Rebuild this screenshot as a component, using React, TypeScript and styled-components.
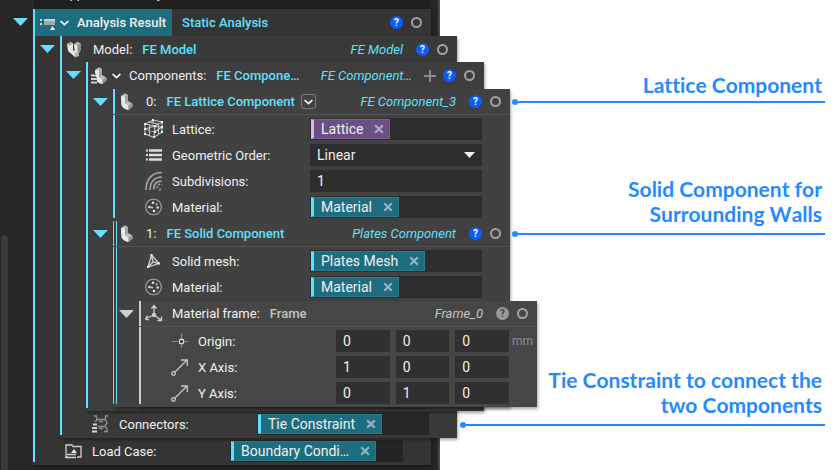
import React from "react";
import styled, { createGlobalStyle, css } from "styled-components";

const CYAN = "#5fe0ff";
const TEAL = "#1e6d7f";

const GlobalStyle = createGlobalStyle`
  *, *::before, *::after { box-sizing: border-box; }
  body { margin: 0; background: #fff; font-family: Roboto, "Liberation Sans", sans-serif; font-size: 13px; }
  button, input, select { font: inherit; color: inherit; border: 0; padding: 0; margin: 0; background: none; border-radius: 0; }
  button { cursor: pointer; }
  svg { flex: none; display: block; }
`;

const Page = styled.div`
  display: grid;
  grid-template-columns: minmax(0, 440fr) minmax(0, 392fr);
  min-height: 100vh;
  overflow: hidden;
`;

const Notebook = styled.main`
  background: #262626;
  border-right: 2px solid #484848;
  display: flex;
  color: #f0f0f0;
  height: 100vh;
`;

const Gutter = styled.div`
  flex: none;
  width: 33px;
  display: flex;
  flex-direction: column;
  justify-content: flex-end;
`;

const ScrollThumb = styled.div`
  width: 7px;
  height: 50vh;
  margin-left: 1px;
  border-radius: 4px 4px 0 0;
  background: #383838;
`;

const Column = styled.div`
  flex: 1;
  min-width: 0;
  margin-right: 7px;
  border-left: 1px solid #2e2e2e;
  margin-left: -1px;
`;

const PreviousBlock = styled.div`
  height: 9px;
  padding-left: 28px;
  overflow: hidden;
  display: flex;
  align-items: flex-end;
  background: #202020;
`;

const ClippedTitle = styled.span`
  line-height: 14px;
  margin-bottom: 8px;
`;

const stripes = {
  solid: css`
    background-image: linear-gradient(${CYAN}, ${CYAN});
    background-size: 2px calc(100% - 3px);
  `,
  double: css`
    background-image: linear-gradient(${CYAN}, ${CYAN}), linear-gradient(${CYAN}, ${CYAN});
    background-size: 1px calc(100% - 3px), 1px calc(100% - 3px);
    background-position: 0 0, 3px 0;
  `,
  plain: css`
    background-image: linear-gradient(#cfcfcf, #cfcfcf);
    background-size: 2px calc(100% - 3px);
  `,
};

const tones = ["#343434", "#393939", "#3d3d3d", "#414141", "#464646"];

const Panel = styled.section<{ $level: number; $stripe: keyof typeof stripes }>`
  flex: 1;
  min-width: 0;
  padding-bottom: ${(p) => (p.$level === 2 ? 4 : 0)}px;
  background-color: ${(p) => tones[p.$level]};
  background-repeat: no-repeat;
  ${(p) => stripes[p.$stripe]}
  box-shadow: 1px 2px 3px rgba(0, 0, 0, 0.35);
`;

const Node = styled.div<{ $step: 0 | 26 | 27 }>`
  display: flex;
  margin-right: ${(p) => (p.$step ? p.$step - 53 : 0)}px;
  margin-left: ${(p) => (p.$step ? 0 : -33)}px;
`;

const ToggleCell = styled.div<{ $step: 0 | 26 | 27 }>`
  flex: none;
  width: ${(p) => p.$step || 33}px;
  display: flex;
  justify-content: flex-end;
  align-items: flex-start;
  padding-right: 5px;
`;

const Toggle = styled.button<{ $muted?: boolean }>`
  display: flex;
  align-items: center;
  height: 26px;
  color: ${(p) => (p.$muted ? "#cfcfcf" : CYAN)};
`;

const Header = styled.header<{ $tall?: boolean; $ruled?: boolean }>`
  display: flex;
  align-items: center;
  height: ${(p) => (p.$tall ? 27 : 26)}px;
  padding: 0 8px 0 5px;
  border-bottom: ${(p) => (p.$ruled ? "1px solid #525252" : "0")};
`;

const HeaderIcon = styled.span`
  display: flex;
  width: 18px;
  flex: none;
`;

const HeaderLabel = styled.span<{ $gap: number }>`
  margin-left: ${(p) => p.$gap}px;
  white-space: nowrap;
`;

const Title = styled.span<{ $muted?: boolean }>`
  margin-left: 10px;
  font-weight: 500;
  color: ${(p) => (p.$muted ? "#c4c4c4" : CYAN)};
  white-space: nowrap;
`;

const VarName = styled.em<{ $muted?: boolean }>`
  margin-left: auto;
  margin-right: 13px;
  color: ${(p) => (p.$muted ? "#c4c4c4" : CYAN)};
  white-space: nowrap;
`;

const ResultTab = styled.div`
  display: flex;
  align-items: center;
  align-self: stretch;
  margin-left: -3px;
  padding: 0 6px 0 4px;
  background: ${TEAL};
  font-weight: 500;
`;

const ChevronButton = styled.button<{ $boxed?: boolean }>`
  display: flex;
  align-items: center;
  justify-content: center;
  width: ${(p) => (p.$boxed ? 15 : 12)}px;
  height: 15px;
  margin-left: ${(p) => (p.$boxed ? 6 : 1)}px;
  border: ${(p) => (p.$boxed ? "1px solid #7c7c7c" : "0")};
  border-radius: 3px;
`;

const Actions = styled.div`
  display: flex;
  align-items: center;
  gap: 7px;
`;

const HelpButton = styled.button<{ $muted?: boolean }>`
  width: 13px;
  height: 13px;
  border-radius: 50%;
  background: ${(p) => (p.$muted ? "#9a9a9a" : "#0a5cff")};
  color: ${(p) => (p.$muted ? "#464646" : "#fff")};
  font-size: 10px;
  font-weight: 700;
  line-height: 13px;
  text-align: center;
`;

const RingButton = styled.button`
  width: 11px;
  height: 11px;
  margin: 0 1px;
  border: 2px solid #a2a2a2;
  border-radius: 50%;
`;

const PlusButton = styled.button`
  display: flex;
  color: #8c8c8c;
  margin-left: -1px;
`;

const Rows = styled.div<{ $single?: boolean }>`
  display: grid;
  grid-template-columns: minmax(0, 1fr);
  gap: 4px;
  padding: ${(p) => (p.$single ? 2 : 3)}px 0 3px;
`;

const RowBox = styled.div`
  display: flex;
  align-items: center;
  height: 22px;
  padding: 0 28px 0 31px;
`;

const RowIcon = styled.span`
  display: flex;
  flex: none;
  width: 20px;
  margin-right: 8px;
  color: #c4c4c4;
`;

const rowLabel = css`
  flex: none;
  width: 138px;
  white-space: nowrap;
`;
const RowLabel = styled.label`${rowLabel}`;
const RowCaption = styled.span`${rowLabel}`;

const Well = styled.div`
  flex: 1;
  min-width: 0;
  height: 22px;
  padding: 1px;
  display: flex;
  background: rgba(0, 0, 0, 0.3);
`;

const ChipBox = styled.span<{ $purple?: boolean }>`
  display: flex;
  align-items: center;
  gap: 11px;
  height: 20px;
  padding: 0 5px 0 7px;
  font-size: 14px;
  white-space: nowrap;
  background: ${(p) => (p.$purple ? "#6a4f82" : TEAL)};
  border: 1px solid ${(p) => (p.$purple ? "#7a6090" : "#287a8c")};
  border-left: 3px solid ${(p) => (p.$purple ? "#d9b3ff" : CYAN)};
`;

const RemoveButton = styled.button`
  display: flex;
  color: rgba(255, 255, 255, 0.5);
`;

const TextInput = styled.input`
  flex: 1;
  min-width: 0;
  height: 22px;
  padding: 0 7px;
  font-size: 14px;
  background: rgba(0, 0, 0, 0.3);
`;

const SelectWell = styled.div`
  flex: 1;
  min-width: 0;
  display: flex;
  align-items: center;
  height: 22px;
  padding-right: 7px;
  background: rgba(0, 0, 0, 0.3);
`;

const Select = styled.select`
  flex: 1;
  min-width: 0;
  height: 22px;
  padding-left: 7px;
  font-size: 14px;
  appearance: none;
`;

const Vector = styled.div`
  flex: 1;
  min-width: 0;
  display: grid;
  grid-template-columns: repeat(3, 1fr);
  gap: 6px;
`;

const Unit = styled.span`
  width: 28px;
  margin-right: -28px;
  padding-left: 3px;
  font-size: 12px;
  color: #8f8f8f;
`;

const Callouts = styled.aside`
  position: relative;
  display: flex;
  flex-direction: column;
  padding: 72px 7px 0 20px;
  font-family: Lato, sans-serif;
  font-size: 21px;
  font-weight: 700;
  font-kerning: none;
  font-variant-ligatures: none;
  line-height: 25px;
  color: #2589ff;
  text-align: right;
`;

const Callout = styled.div<{ $inset?: boolean; $before?: number }>`
  margin-left: ${(p) => (p.$inset ? 52 : 0)}px;
  margin-top: ${(p) => p.$before ?? 0}px;
`;

const CalloutText = styled.p<{ $width: number }>`
  margin: 0 3px 0 auto;
  max-width: ${(p) => p.$width}px;
`;

const Leader = styled.div<{ $gap: number }>`
  display: flex;
  align-items: center;
  height: 6px;
  margin-top: ${(p) => p.$gap}px;
  &::before { content: ""; width: 6px; height: 6px; border-radius: 50%; background: #2589ff; }
  &::after { content: ""; flex: 1; height: 2px; background: #2589ff; }
`;

/* ---------- drawings ---------- */

const TriangleDown = ({ w = 15, h = 8 }: { w?: number; h?: number }) => (
  <svg width={w} height={h} viewBox="0 0 15 8"><path d="M0 0H15L7.5 8Z" fill="currentColor" /></svg>
);
const Chevron = () => (
  <svg width="9" height="6" viewBox="0 0 9 6"><path d="M0.600 1L4.500 4.700L8.400 1" fill="none" stroke="#fff" strokeWidth="1.700" /></svg>
);
const Cross = () => (
  <svg width="10" height="10" viewBox="0 0 10 10"><path d="M1.2 1.2L8.8 8.8M8.8 1.2L1.2 8.8" stroke="currentColor" strokeWidth="2.2" /></svg>
);
const Plus = () => (
  <svg width="12" height="12" viewBox="0 0 12 12"><path d="M6 0V12M0 6H12" stroke="currentColor" strokeWidth="2" /></svg>
);

const ResultIcon = () => (
  <svg width="18" height="16" viewBox="0 0 18 16">
    <path d="M1 4h2v2H1zM1 8h2v2H1z" fill="#cfe0e4" />
    <path d="M5 4h11v6H5z" fill="#9fa8aa" /><path d="M5 4h11v2H5z" fill="#c9cfd1" />
    <path d="M13.500 11L16 15H11Z" fill="#f2f2f2" />
  </svg>
);
const Limb = () => (
  <>
    <path d="M1 3L4.500 0.500Q7.500 0 8 3V8L11.500 10Q13 11 12.500 13.500L8.500 17Q3 16 1.500 12Z" fill="#bdbdbd" />
    <path d="M1 3L5 3.500V10.500L8.500 12.500V17Q3 16 1.500 12Z" fill="#e9e9e9" />
    <path d="M8.500 12.500L12.500 10.500V13.500L8.500 17Z" fill="#929292" />
    <path d="M5 3.500L8 2V8L5 10.500Z" fill="#a2a2a2" />
  </>
);
const ComponentIcon = () => (
  <svg width="18" height="18" viewBox="-2 0 18 18"><Limb /></svg>
);
const ModelIcon = () => (
  <svg width="18" height="17" viewBox="-1 0 18 17">
    <path d="M1 3L5 1L7 2.500V9L9 10.500V16L2 10Z" fill="#e6e6e6" />
    <path d="M1 3L5 1L7 2.500L3.500 4.500Z" fill="#a8a8a8" />
    <path d="M8 3L12 0.500L15 3V9L13 12V15L9 16.500V10Z" fill="#b2b2b2" />
    <path d="M8 3L11 5V11L9 12Z" fill="#f0f0f0" /><path d="M12 4L15 3V9L12 11Z" fill="#8c8c8c" />
  </svg>
);
const ComponentsIcon = () => (
  <svg width="18" height="18" viewBox="0 0 18 18">
    <g transform="translate(3 0)"><Limb /></g>
    <path d="M0 8.500h5M0 12h6M0 15.500h6" stroke="#3d3d3d" strokeWidth="3.600" />
    <path d="M0 8.500h5M0 12h6M0 15.500h6" stroke="#d0d0d0" strokeWidth="2" />
  </svg>
);
const LatticeIcon = () => (
  <svg width="20" height="20" viewBox="0 0 20 20" fill="none" stroke="currentColor" strokeWidth="1.100">
    <path d="M1 5L9 1L18 3L11 7ZM1 5V15L10 18.500L18 13V3M11 7L10 18.500M1 10L10.500 13L18 8M5.500 6V16.500M14.500 5V15.500M5 3L14.500 5M9 1V5.500M1 10L9 7.500L18 8" />
    <path d="M0 4h2v2H0zM8 0h2v2H8zM17 2h2v2h-2zM10 6h2v2h-2zM0 9h2v2H0zM0 14h2v2H0zM9 17h2v2H9zM17 12h2v2h-2zM17 7h2v2h-2zM10 12h2v2h-2z" fill="#efefef" stroke="none" />
  </svg>
);
const OrderIcon = () => (
  <svg width="20" height="20" viewBox="0 0 20 20" fill="none" stroke="#dcdcdc">
    <path d="M2 5.500h2M2 10h2M2 14.500h2" strokeWidth="2" /><path d="M5 5.500h13M5 10h13M5 14.500h13" strokeWidth="2.400" />
  </svg>
);
const SubdivisionIcon = () => (
  <svg width="20" height="20" viewBox="0 0 20 20" fill="none" stroke="#a6a6a6" strokeWidth="1.600">
    <path d="M2 19C2 8 8 1.500 18 1.500M6 19C6 11 10.500 6 18 6M10 18.500C9 13 13 9.500 18 10.500" />
    <path d="M13.500 17C12 14 15 12.500 18 14M15 19L18 17.500" strokeDasharray="2 1.500" />
  </svg>
);
const MaterialIcon = () => (
  <svg width="20" height="20" viewBox="0 0 20 20">
    <circle cx="9.500" cy="10" r="7.800" fill="none" stroke="#a6a6a6" strokeWidth="1.100" />
    <g fill="#dedede">
      <circle cx="9" cy="5.800" r="1.300" /><circle cx="5.500" cy="10" r="1.300" />
      <circle cx="10" cy="14" r="1.300" /><circle cx="13.700" cy="10.500" r="1.300" />
      <circle cx="12.600" cy="7.200" r="0.900" /><circle cx="8" cy="10.500" r="0.900" />
    </g>
  </svg>
);
const MeshIcon = () => (
  <svg width="20" height="20" viewBox="0 0 20 20" fill="none" stroke="#cfcfcf" strokeWidth="1.300">
    <path d="M7.500 4L4 16L15 12.500ZM7.500 4L9 11L15 12.500M9 11L4 16" />
    <path d="M6.500 3h2v2h-2zM3 15h2v2H3zM14 11.500h2v2h-2z" fill="#e8e8e8" stroke="none" />
  </svg>
);
const FrameIcon = () => (
  <svg width="20" height="20" viewBox="0 0 20 20" fill="none" stroke="#cfcfcf" strokeWidth="1.300">
    <path d="M10 11V2M7.500 4.500L10 1.500L12.500 4.500M10 11L2 14.500M3.500 11.500L1.500 14.800L5 16M10 11L17 16M17.500 12.500V16.500H13.500" />
    <circle cx="10" cy="11" r="1.500" fill="#cfcfcf" />
  </svg>
);
const OriginIcon = () => (
  <svg width="20" height="20" viewBox="0 0 20 20" fill="none" stroke="#8a8a8a">
    <path d="M2 10.500H8M13 10.500H18M11.500 2V8M11.500 13V17" strokeWidth="1.200" />
    <rect x="9.500" y="8.500" width="4" height="4" rx="1" fill="#222" stroke="#dcdcdc" strokeWidth="1.300" />
  </svg>
);
const AxisIcon = () => (
  <svg width="20" height="20" viewBox="0 0 20 20" fill="none" stroke="#c8c8c8" strokeWidth="1.300">
    <path d="M4.500 15.500L17 3M11 3H17.300V9" /><circle cx="3.500" cy="16.500" r="1.800" />
  </svg>
);
const ConnectorIcon = () => (
  <svg width="20" height="20" viewBox="0 0 20 20" fill="none" stroke="#8e8e8e" strokeWidth="1.400">
    <path d="M5 2L6 5L4.500 8M15 2L14 5L16 9L14 12L16 15V18M6 5.500H14M7 12.500H14M8 7.500H12M8 14.500H12M3 2H6M14 2H17M13 17.500H17" />
    <path d="M2 10.500h4M1 14h5M1 17.500h5" stroke="#d4d4d4" strokeWidth="2.200" />
  </svg>
);
const LoadIcon = () => (
  <svg width="20" height="20" viewBox="0 0 20 20" fill="none" stroke="#cfcfcf" strokeWidth="1.300">
    <path d="M4 16H2V4H8L9 5.500H17V16H13" /><path d="M10 8L13 12H7Z" fill="#e8e8e8" stroke="none" /><path d="M3 13.500H12M1 16.500H12" />
  </svg>
);

/* ---------- parts ---------- */

const HeaderActions = ({ name, muted, add }: { name?: string; muted?: boolean; add?: boolean }) => (
  <>
    <VarName $muted={muted}>{name}</VarName>
    <Actions>
      {add && <PlusButton aria-label="Add"><Plus /></PlusButton>}
      <HelpButton $muted={muted} aria-label="Help">?</HelpButton>
      <RingButton aria-label="Options" />
    </Actions>
  </>
);

type BranchProps = {
  level: number;
  step: 0 | 26 | 27;
  stripe?: keyof typeof stripes;
  children: React.ReactNode;
};
const Branch = ({ level, step, stripe = "solid", children }: BranchProps) => (
  <Node $step={step}>
    <ToggleCell $step={step}>
      <Toggle $muted={stripe === "plain"} aria-label="Collapse" aria-expanded><TriangleDown /></Toggle>
    </ToggleCell>
    <Panel $level={level} $stripe={stripe}>{children}</Panel>
  </Node>
);

const ChipRow = ({ icon, label, value, purple }: { icon: React.ReactNode; label: string; value: string; purple?: boolean }) => (
  <RowBox>
    <RowIcon>{icon}</RowIcon>
    <RowCaption>{label}</RowCaption>
    <Well>
      <ChipBox $purple={purple}>
        {value}
        <RemoveButton aria-label={`Remove ${value}`}><Cross /></RemoveButton>
      </ChipBox>
    </Well>
  </RowBox>
);

const VectorRow = ({ id, icon, label, values, unit }: { id: string; icon: React.ReactNode; label: string; values: string[]; unit?: string }) => (
  <RowBox>
    <RowIcon>{icon}</RowIcon>
    <RowLabel htmlFor={`${id}-0`}>{label}</RowLabel>
    <Vector>
      {values.map((v, i) => (
        <TextInput key={i} id={`${id}-${i}`} aria-label={`${label} ${i + 1}`} defaultValue={v} />
      ))}
    </Vector>
    {unit && <Unit>{unit}</Unit>}
  </RowBox>
);

export default function App() {
  return (
    <>
      <GlobalStyle />
      <Page>
        <Notebook>
          <Gutter><ScrollThumb /></Gutter>
          <Column>
            <PreviousBlock><ClippedTitle>Applied Boundary</ClippedTitle></PreviousBlock>
            <Branch level={0} step={0}>
              <Header $tall>
                <ResultTab>
                  <HeaderIcon><ResultIcon /></HeaderIcon>
                  <ChevronButton aria-label="More"><Chevron /></ChevronButton>
                  <HeaderLabel $gap={7}>Analysis Result</HeaderLabel>
                </ResultTab>
                <Title>Static Analysis</Title>
                <HeaderActions />
              </Header>
              <Branch level={1} step={27}>
                <Header>
                  <HeaderIcon><ModelIcon /></HeaderIcon>
                  <HeaderLabel $gap={10}>Model:</HeaderLabel>
                  <Title>FE Model</Title>
                  <HeaderActions name="FE Model" />
                </Header>
                <Branch level={2} step={26}>
                  <Header $tall>
                    <HeaderIcon><ComponentsIcon /></HeaderIcon>
                    <ChevronButton aria-label="More"><Chevron /></ChevronButton>
                    <HeaderLabel $gap={7}>Components:</HeaderLabel>
                    <Title>FE Compone…</Title>
                    <HeaderActions name="FE Component…" add />
                  </Header>
                  <Branch level={3} step={27}>
                    <Header $ruled>
                      <HeaderIcon><ComponentIcon /></HeaderIcon>
                      <HeaderLabel $gap={10}>0:</HeaderLabel>
                      <Title>FE Lattice Component</Title>
                      <ChevronButton $boxed aria-label="Change type"><Chevron /></ChevronButton>
                      <HeaderActions name="FE Component_3" />
                    </Header>
                    <Rows>
                      <ChipRow icon={<LatticeIcon />} label="Lattice:" value="Lattice" purple />
                      <RowBox>
                        <RowIcon><OrderIcon /></RowIcon>
                        <RowLabel htmlFor="order">Geometric Order:</RowLabel>
                        <SelectWell>
                          <Select id="order" defaultValue="Linear"><option>Linear</option></Select>
                          <TriangleDown w={11} h={6} />
                        </SelectWell>
                      </RowBox>
                      <RowBox>
                        <RowIcon><SubdivisionIcon /></RowIcon>
                        <RowLabel htmlFor="subdivisions">Subdivisions:</RowLabel>
                        <TextInput id="subdivisions" defaultValue="1" />
                      </RowBox>
                      <ChipRow icon={<MaterialIcon />} label="Material:" value="Material" />
                    </Rows>
                  </Branch>
                  <Branch level={3} step={27} stripe="double">
                    <Header $ruled>
                      <HeaderIcon><ComponentIcon /></HeaderIcon>
                      <HeaderLabel $gap={10}>1:</HeaderLabel>
                      <Title>FE Solid Component</Title>
                      <HeaderActions name="Plates Component" />
                    </Header>
                    <Rows>
                      <ChipRow icon={<MeshIcon />} label="Solid mesh:" value="Plates Mesh" />
                      <ChipRow icon={<MaterialIcon />} label="Material:" value="Material" />
                    </Rows>
                    <Branch level={4} step={26} stripe="plain">
                      <Header $ruled>
                        <HeaderIcon><FrameIcon /></HeaderIcon>
                        <HeaderLabel $gap={10}>Material frame:</HeaderLabel>
                        <Title $muted>Frame</Title>
                        <HeaderActions name="Frame_0" muted />
                      </Header>
                      <Rows>
                        <VectorRow id="origin" icon={<OriginIcon />} label="Origin:" values={["0", "0", "0"]} unit="mm" />
                        <VectorRow id="x-axis" icon={<AxisIcon />} label="X Axis:" values={["1", "0", "0"]} />
                        <VectorRow id="y-axis" icon={<AxisIcon />} label="Y Axis:" values={["0", "1", "0"]} />
                      </Rows>
                    </Branch>
                  </Branch>
                </Branch>
                <Rows $single>
                  <ChipRow icon={<ConnectorIcon />} label="Connectors:" value="Tie Constraint" />
                </Rows>
              </Branch>
              <Rows $single>
                <ChipRow icon={<LoadIcon />} label="Load Case:" value="Boundary Condi…" />
              </Rows>
            </Branch>
          </Column>
        </Notebook>
        <Callouts>
          <Callout $inset>
            <CalloutText $width={280}>Lattice Component</CalloutText>
            <Leader $gap={2} />
          </Callout>
          <Callout $inset $before={71}>
            <CalloutText $width={210}>Solid Component for Surrounding Walls</CalloutText>
            <Leader $gap={5} />
          </Callout>
          <Callout $before={130}>
            <CalloutText $width={290}>Tie Constraint to connect the two Components</CalloutText>
            <Leader $gap={5} />
          </Callout>
        </Callouts>
      </Page>
    </>
  );
}
